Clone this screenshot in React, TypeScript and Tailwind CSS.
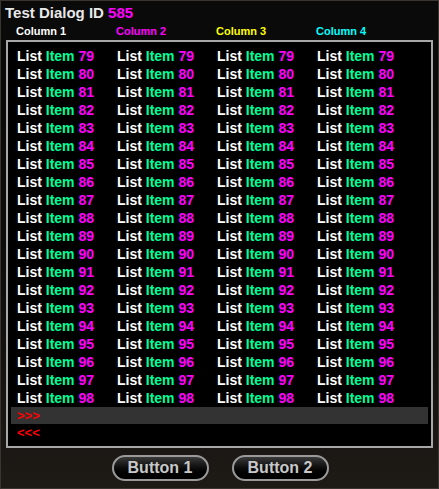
import React from "react"

const columns = [
  { title: "Column 1", color: "text-white" },
  { title: "Column 2", color: "text-[#ff00ff]" },
  { title: "Column 3", color: "text-[#ffff00]" },
  { title: "Column 4", color: "text-[#00ffff]" },
]

const rows = Array.from({ length: 20 }, (_, i) => 79 + i)

const Button = ({ label }: { label: string }) => (
  <button className="h-[26px] w-[97px] rounded-full border-2 border-[#9a9a9a] bg-gradient-to-b from-[#3a3a3a] via-[#0c0c0c] to-[#000] text-[16px] font-bold leading-none text-[#c8c8c8]">
    {label}
  </button>
)

export default function App() {
  return (
    <div
      className="flex h-[489px] w-[439px] flex-col border border-[#3a3530] bg-gradient-to-b from-[#0a0a0a] via-[#0d0c0b] to-[#1e1a16]"
      style={{ fontFamily: '"Liberation Sans", Arial, sans-serif' }}
    >
      <div className="px-[4px] pt-[2px] text-[15px] font-bold leading-[20px] text-[#e8e8e8]">
        Test Dialog ID <span className="text-[#ff00ff]">585</span>
      </div>
      <div className="flex h-[16px] items-center pl-[15px]">
        {columns.map((c) => (
          <div key={c.title} className={`w-[100px] text-[11px] font-bold ${c.color}`}>
            {c.title}
          </div>
        ))}
      </div>
      <div className="mx-[5px] mt-[1px] flex h-[408px] flex-col border-2 border-[#a8a8a8] bg-black pt-[5px]">
        {rows.map((n) => (
          <div key={n} className="flex h-[18px] items-center pl-[9px]">
            {columns.map((c) => (
              <div key={c.title} className="w-[100px] text-[14px] font-bold leading-[18px] text-white">
                List <span className="text-[#00ff99]">Item</span>{" "}
                <span className="text-[#ff00ff]">{n}</span>
              </div>
            ))}
          </div>
        ))}
        <div className="mx-[3px] flex h-[17px] items-center bg-[#333] pl-[6px] text-[13px] font-bold text-[#ff0000]">
          &gt;&gt;&gt;
        </div>
        <div className="mx-[3px] flex h-[18px] items-center pl-[6px] text-[13px] font-bold text-[#ff0000]">
          &lt;&lt;&lt;
        </div>
      </div>
      <div className="mt-[7px] flex justify-center gap-[23px] pl-[1px]">
        <Button label="Button 1" />
        <Button label="Button 2" />
      </div>
    </div>
  )
}
